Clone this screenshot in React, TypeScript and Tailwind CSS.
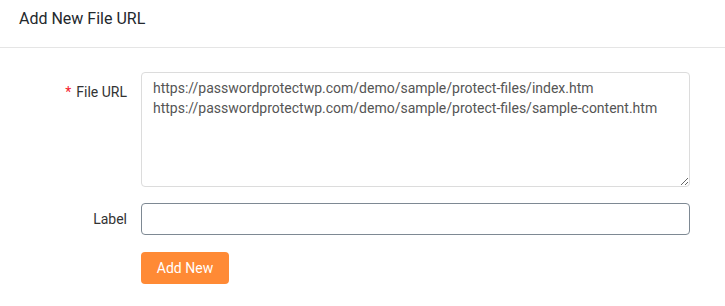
const FileUrlForm = () => {
  return (
    <div className="w-[725px] h-[306px] bg-white font-['Roboto',sans-serif] text-[#32373c]">
      <div className="h-[48px] border-b border-[#e5e5e5] px-[19px] pt-[8px]">
        <h2 className="text-[16px] leading-[22px] text-[#23282d]">Add New File URL</h2>
      </div>

      <div className="pt-[24px] pr-[35px]">
        <div className="flex">
          <label className="w-[141px] shrink-0 pr-[14px] pt-[10px] text-right text-[14px] leading-[20px] text-[#333]">
            <span className="text-[#f5222d] mr-[5px]">*</span>
            File URL
          </label>
          <textarea
            className="flex-1 h-[115px] rounded-[4px] border border-[#dcdcdc] px-[11px] py-[5px] text-[14px] leading-[20px] text-[#555] outline-none"
            defaultValue={
              "https://passwordprotectwp.com/demo/sample/protect-files/index.htm\nhttps://passwordprotectwp.com/demo/sample/protect-files/sample-content.htm"
            }
          />
        </div>

        <div className="flex items-center mt-[16px]">
          <label className="w-[141px] shrink-0 pr-[14px] text-right text-[14px] leading-[20px] text-[#333]">
            Label
          </label>
          <input
            type="text"
            className="flex-1 h-[32px] rounded-[4px] border border-[#7e8993] px-[8px] text-[14px] outline-none"
          />
        </div>

        <div className="flex mt-[17px]">
          <div className="w-[141px] shrink-0" />
          <button className="w-[88px] h-[32px] rounded-[4px] bg-[#ff8a35] text-white text-[14px]">
            Add New
          </button>
        </div>
      </div>
    </div>
  );
};

export default function App() {
  return <FileUrlForm />;
}
